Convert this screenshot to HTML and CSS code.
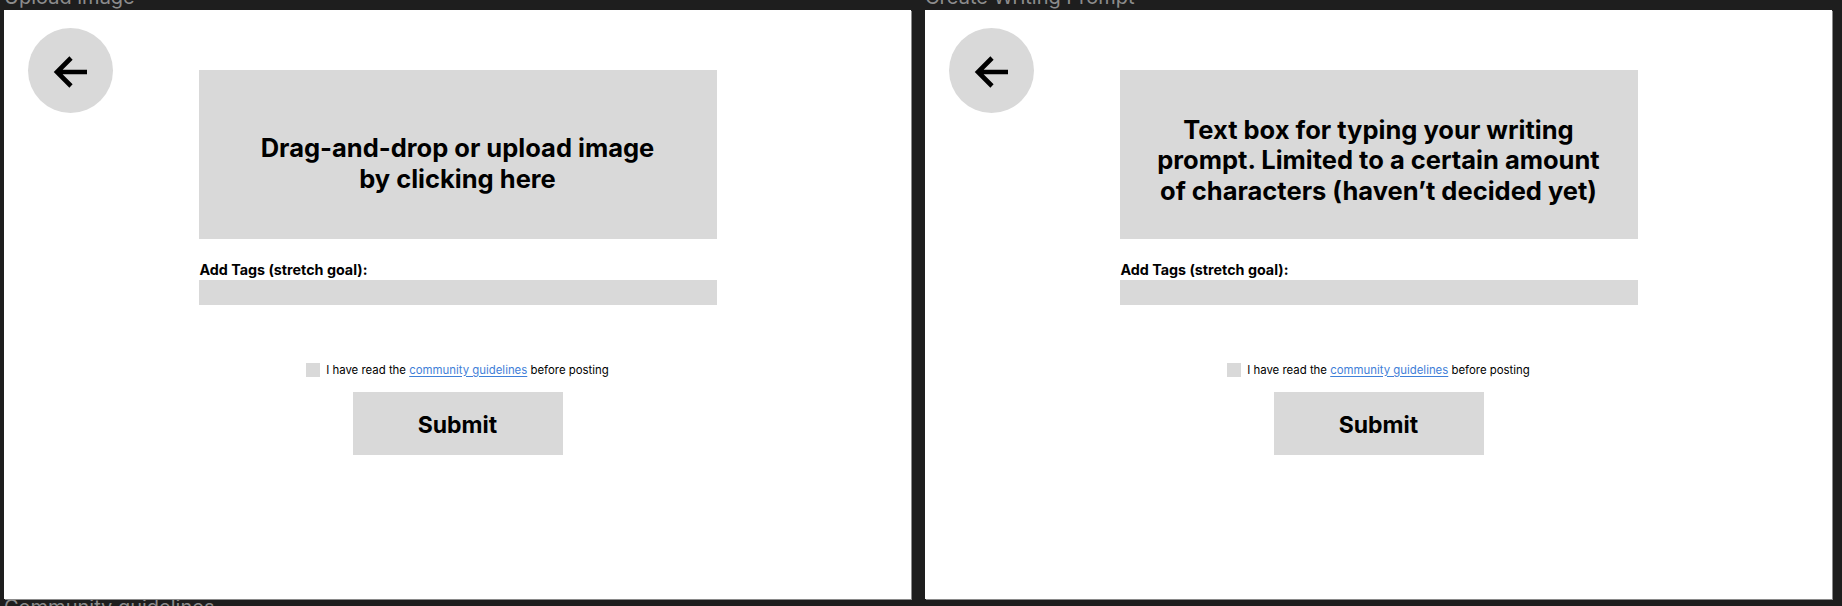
FILE: index.html
```html
<!DOCTYPE html>
<html lang="en">
<head>
<meta charset="utf-8">
<title>Upload image / Create Writing Prompt</title>
<link rel="stylesheet" href="styles.css">
</head>
<body>
<div class="canvas">
  <div class="frames">
    <div class="frame-wrap">
      <div class="frame-label">Upload image</div>
      <section class="frame">
        <button class="back" aria-label="Back">
          <svg width="34" height="32" viewBox="0 0 34 32"><path d="M34 16H4M18 2L4 16L18 30" fill="none" stroke="#000" stroke-width="4.6" stroke-linejoin="miter" stroke-linecap="butt"/></svg>
        </button>
        <div class="content">
          <div class="dropbox dropbox-upload"><p class="big">Drag-and-drop or upload image<br>by clicking here</p></div>
          <label class="tags-label">Add Tags (stretch goal):</label>
          <div class="tags-bar"></div>
          <div class="agree"><span class="check"></span><span>I have read the <a href="#">community guidelines</a> before posting</span></div>
          <div class="submit">Submit</div>
        </div>
      </section>
    </div>
    <div class="frame-wrap">
      <div class="frame-label">Create Writing Prompt</div>
      <section class="frame">
        <button class="back" aria-label="Back">
          <svg width="34" height="32" viewBox="0 0 34 32"><path d="M34 16H4M18 2L4 16L18 30" fill="none" stroke="#000" stroke-width="4.6" stroke-linejoin="miter" stroke-linecap="butt"/></svg>
        </button>
        <div class="content">
          <div class="dropbox"><p class="big">Text box for typing your writing<br>prompt. Limited to a certain amount<br>of characters (haven’t decided yet)</p></div>
          <label class="tags-label">Add Tags (stretch goal):</label>
          <div class="tags-bar"></div>
          <div class="agree"><span class="check"></span><span>I have read the <a href="#">community guidelines</a> before posting</span></div>
          <div class="submit">Submit</div>
        </div>
      </section>
    </div>
  </div>
  <div class="frame-label bottom-label">Community guidelines</div>
</div>
</body>
</html>
```

FILE: styles.css
```css
html, body {
  margin: 0;
  padding: 0;
  background: #1e1e1e;
  overflow: hidden;
}
body {
  font-family: Inter, "Noto Sans", sans-serif;
  color: #000;
}
.canvas {
  position: relative;
  width: 1842px;
  height: 606px;
  overflow: hidden;
}
.frames {
  display: flex;
  gap: 14px;
  padding: 10px 0 0 4px;
}
.frame-wrap {
  position: relative;
}
.frame-label {
  position: absolute;
  left: 0;
  top: -25px;
  font-size: 20px;
  line-height: 24px;
  color: #8c8c8c;
  white-space: nowrap;
}
.bottom-label {
  left: 4px;
  top: 595px;
}
.frame {
  position: relative;
  width: 907px;
  height: 589px;
  background: #fff;
  box-shadow: 1px 1px 0 #8a8a8a;
}
.back {
  position: absolute;
  left: 24px;
  top: 18px;
  width: 85px;
  height: 85px;
  border: 0;
  padding: 0;
  border-radius: 50%;
  background: #d9d9d9;
  display: flex;
  align-items: center;
  justify-content: center;
}
.back svg {
  margin-top: 2px;
  margin-left: -1px;
}
.content {
  display: flex;
  flex-direction: column;
  align-items: center;
  padding-top: 60px;
}
.dropbox {
  width: 518px;
  height: 169px;
  background: #d9d9d9;
  display: flex;
  align-items: center;
  justify-content: center;
  box-sizing: border-box;
  padding-top: 12px;
}
.dropbox-upload {
  padding-top: 18px;
}
.big {
  margin: 0;
  font-size: 25.5px;
  line-height: 30.5px;
  font-weight: 700;
  text-align: center;
}
.tags-label {
  width: 518px;
  margin-top: 22px;
  padding-left: 1px;
  box-sizing: border-box;
  font-size: 14.3px;
  line-height: 17px;
  font-weight: 700;
}
.tags-bar {
  width: 518px;
  height: 25px;
  margin-top: 2px;
  background: #d9d9d9;
}
.agree {
  display: flex;
  align-items: center;
  gap: 6px;
  margin-top: 58px;
  height: 14px;
  font-size: 11.4px;
  line-height: 15px;
  color: #000;
}
.check {
  width: 14px;
  height: 14px;
  background: #d9d9d9;
  flex: none;
}
.agree a {
  color: #3f80d8;
  text-decoration: underline;
  text-underline-offset: 2px;
}
.submit {
  margin-top: 15px;
  width: 210px;
  height: 63px;
  background: #d9d9d9;
  display: flex;
  align-items: center;
  justify-content: center;
  padding-top: 2px;
  box-sizing: border-box;
  font-size: 23px;
  font-weight: 700;
}
```
